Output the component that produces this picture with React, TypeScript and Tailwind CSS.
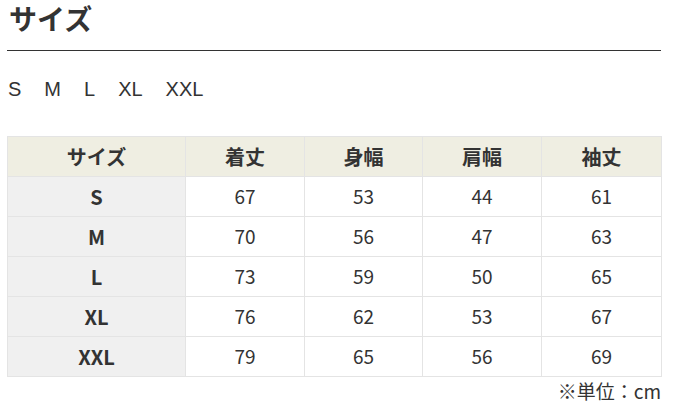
const headers = ['着丈', '身幅', '肩幅', '袖丈']

const rows = [
  { size: 'S', values: [67, 53, 44, 61] },
  { size: 'M', values: [70, 56, 47, 63] },
  { size: 'L', values: [73, 59, 50, 65] },
  { size: 'XL', values: [76, 62, 53, 67] },
  { size: 'XXL', values: [79, 65, 56, 69] },
]

const sizes = ['S', 'M', 'L', 'XL', 'XXL']

export default function App() {
  return (
    <div
      className="w-[673px] h-[415px] bg-white text-[#333] overflow-hidden"
      style={{ fontFamily: '"Noto Sans CJK JP", "Noto Sans", sans-serif' }}
    >
      <div className="px-[7px] pr-[12px]">
        <h2 className="text-[28px] font-bold leading-[36px] pl-[2px] pb-[14px] border-b border-[#333]">サイズ</h2>
        <div
          className="flex gap-[23px] text-[20px] leading-[24px] pt-[26px] pl-[1px]"
          style={{ fontFamily: '"Liberation Sans", Arial, sans-serif' }}
        >
          {sizes.map((s) => (
            <span key={s}>{s}</span>
          ))}
        </div>
        <table className="w-[654px] mt-[35px] border-collapse table-fixed text-[19px]">
          <colgroup>
            <col className="w-[178px]" />
            <col className="w-[119px]" />
            <col className="w-[118px]" />
            <col className="w-[119px]" />
            <col className="w-[120px]" />
          </colgroup>
          <thead>
            <tr className="bg-[#efeee2] h-[40px]">
              <th className="border border-[#e4e4e4] font-bold text-[20px]">サイズ</th>
              {headers.map((h) => (
                <th key={h} className="border border-[#e4e4e4] font-bold text-[20px]">{h}</th>
              ))}
            </tr>
          </thead>
          <tbody>
            {rows.map((r) => (
              <tr key={r.size} className="h-[40px]">
                <td className="border border-[#e4e4e4] bg-[#f0f0f0] text-center font-bold text-[20px]">{r.size}</td>
                {r.values.map((v, i) => (
                  <td key={i} className="border border-[#e4e4e4] text-center">{v}</td>
                ))}
              </tr>
            ))}
          </tbody>
        </table>
        <div className="w-[654px] text-right text-[19px] leading-[28px]">※単位：cm</div>
      </div>
    </div>
  )
}
